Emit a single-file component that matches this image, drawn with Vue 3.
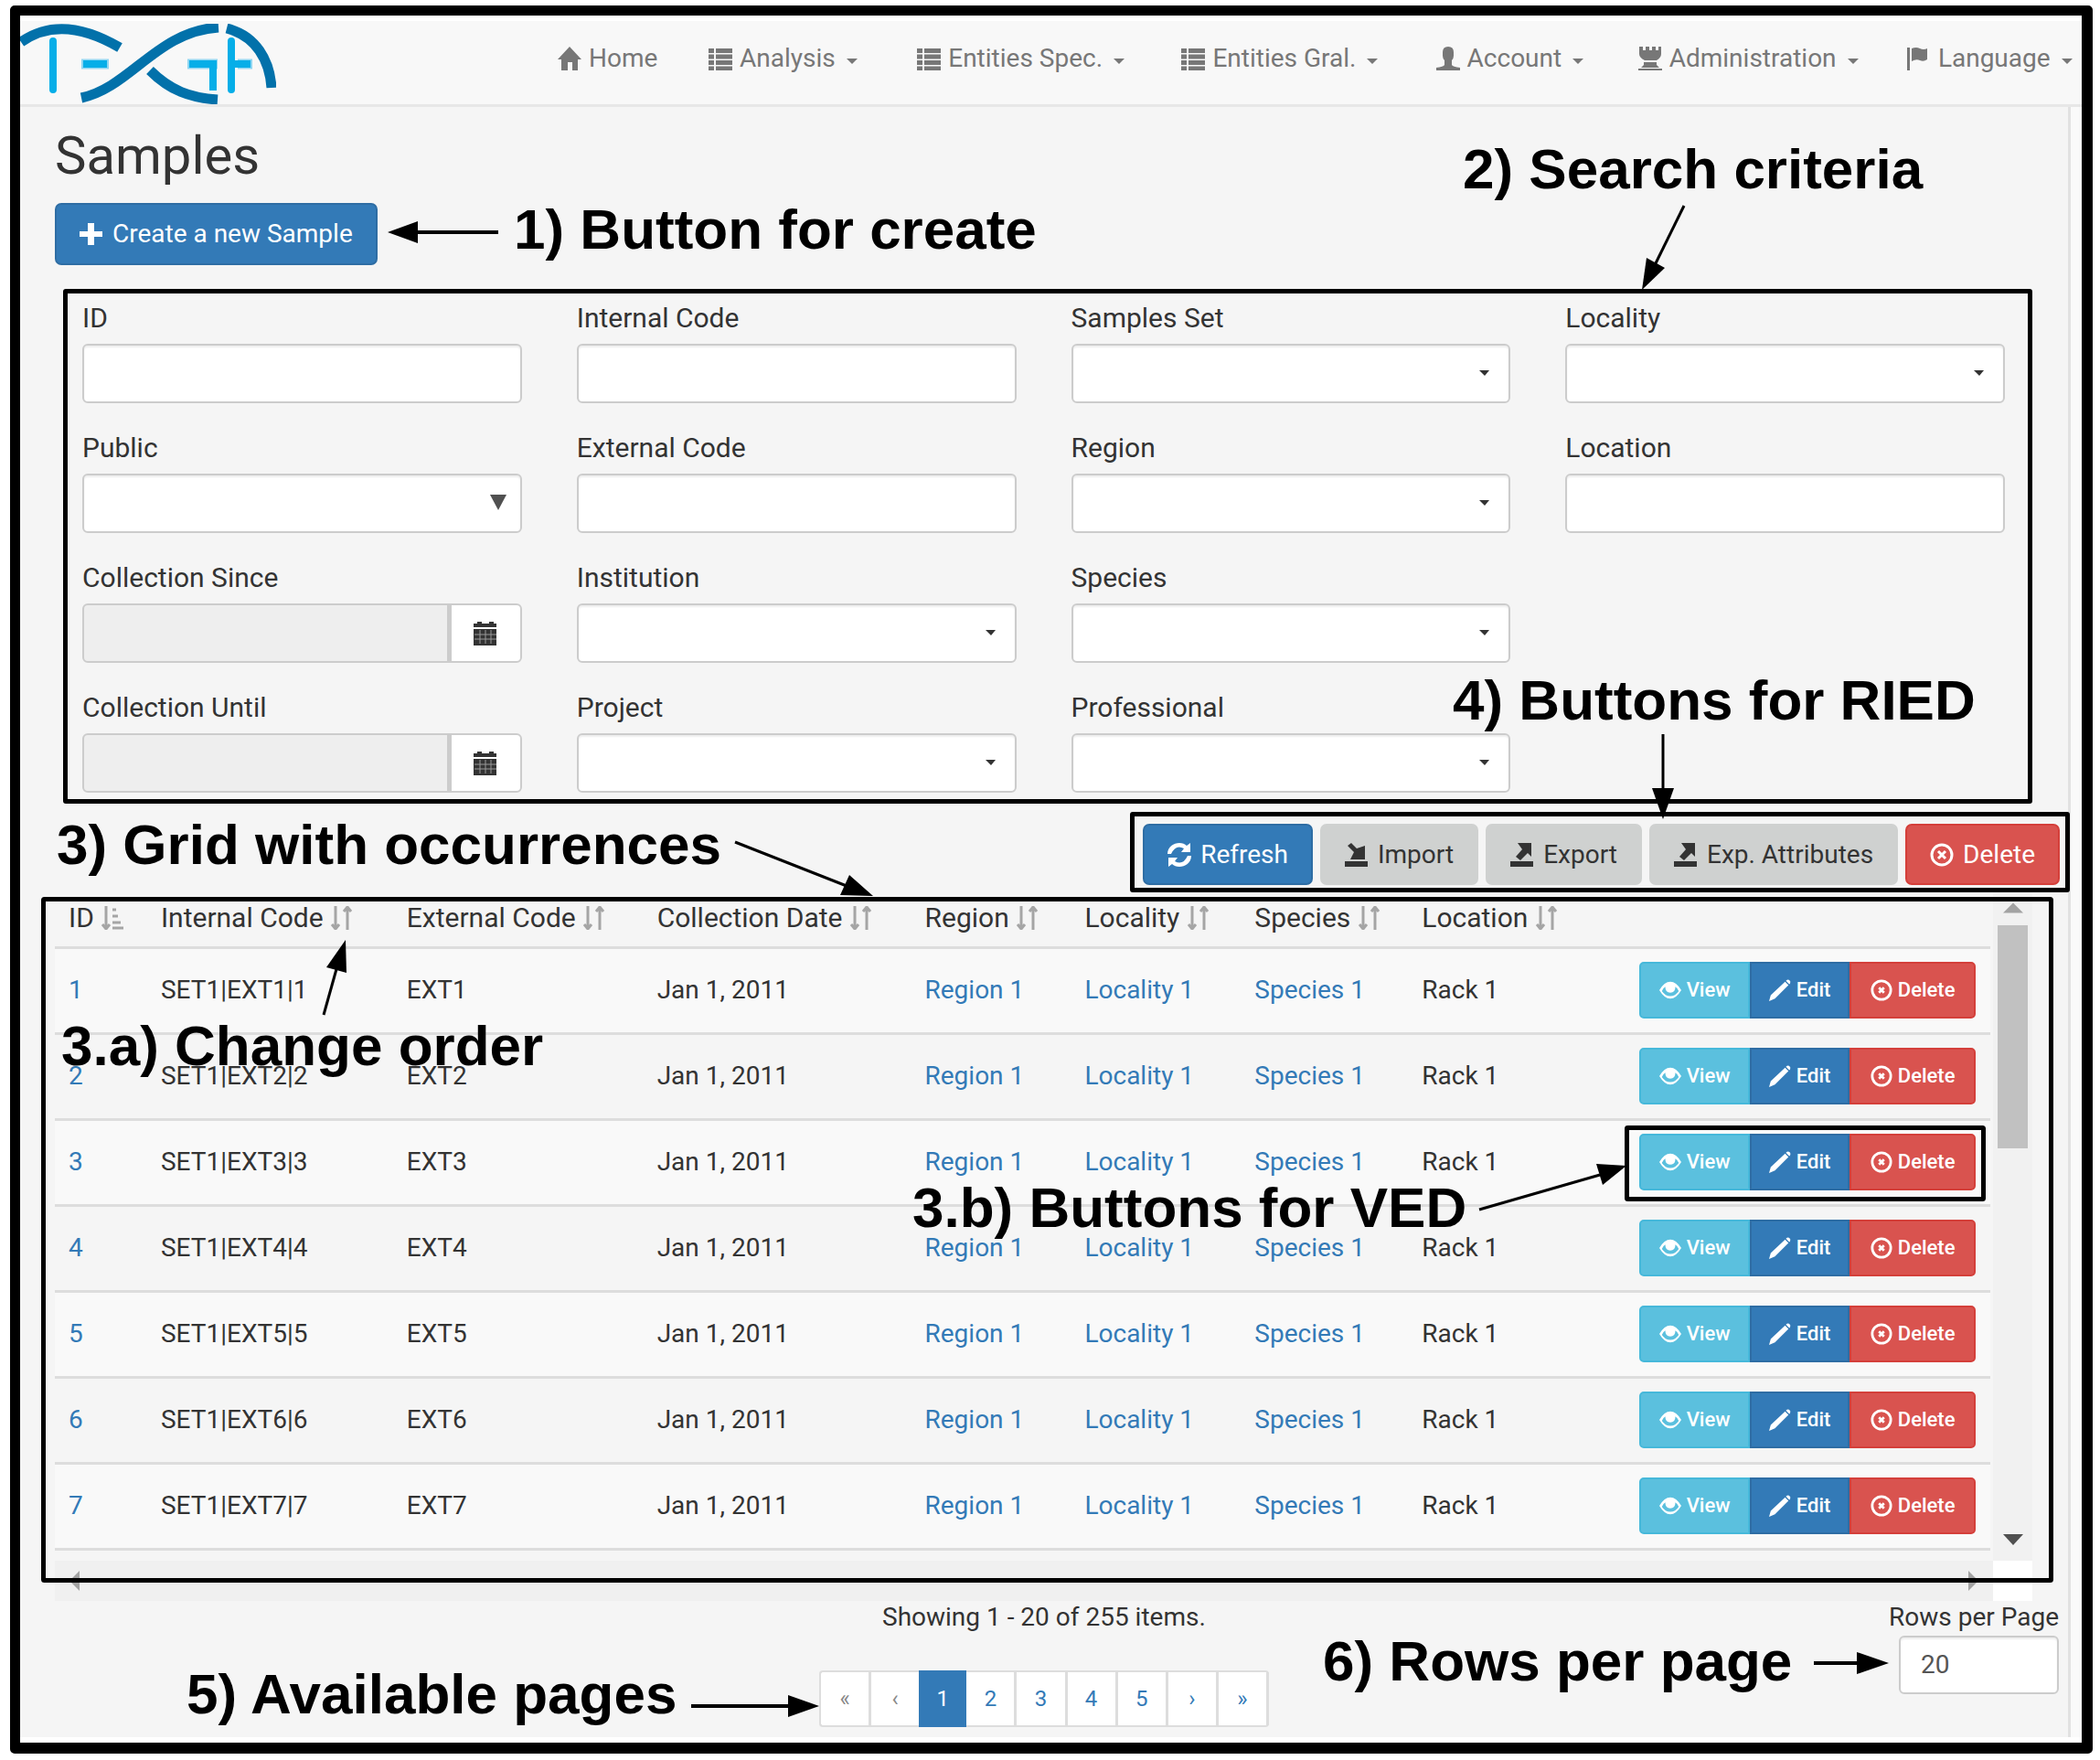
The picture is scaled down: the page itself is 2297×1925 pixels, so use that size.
<script setup>
import { ref } from 'vue'

const icons = {
  home: 'M13 0 26 14h-4v12h-6v-9h-5v9H4V14H0z',
  list: 'M0 2h6v5H0zM8 2h18v5H8zM0 8.500h6v5H0zM8 8.500h18v5H8zM0 15h6v5H0zM8 15h18v5H8zM0 21.500h6v4.500H0zM8 21.500h18v4.500H8z',
  pawn: 'M7 6q0-6 6-6t6 6v4q0 3-2 5v5q1 2 9 3v3H0v-3q8-1 9-3v-5q-2-2-2-5z',
  tower: 'M1 0h4v4h3V0h4v4h3V0h4v4h3V0h3v8q0 4-5 7H7Q1 12 1 8zM6 17h14v3H6zM6 20h14l3 3H3zM0 24h26v2H0z',
  flag: 'M0 1h3v25H0zM5 2q5-2 9 0t8 0v12q-4 3-8 1t-9 1z',
  plus: 'M9 1h7v9h9v6h-9v9H9v-9H0v-6h9z',
  refresh: 'M0 12C0 4 7 0 13 0q5 0 8 3l4-3v10H15l3-4Q9 1 4 12zM26 14c0 8-7 12-13 12q-5 0-8-3l-4 3V16h10l-3 4q9 5 14-6z',
  import: 'M0 20h25v6H0zM3 3l4-3 6 6 9-3v15H6l4-8z',
  export: 'M0 20h25v6H0zM8 0h15v15l-4-4-8 8-5-4 7-8z',
  eye: 'M0 13Q6 3 13 3t13 10Q20 23 13 23T0 13zM3 14q4 6 10 6t10-6q-1-3-4-5 0 7-6 7t-6-7q-3 2-4 5z',
  pencil: 'M0 26l2-7L19 3l4 4L7 23zM20 2q2-2 4-1t1 4l-1 1z',
  calendar: 'M0 2h4V0h5v2h8V0h5v2h3v4H0zM0 8h25v18H0z'
}

const nav = [
  { label: 'Home', icon: 'home', menu: false },
  { label: 'Analysis', icon: 'list', menu: true },
  { label: 'Entities Spec.', icon: 'list', menu: true },
  { label: 'Entities Gral.', icon: 'list', menu: true },
  { label: 'Account', icon: 'pawn', menu: true },
  { label: 'Administration', icon: 'tower', menu: true },
  { label: 'Language', icon: 'flag', menu: true }
]

const fields = [
  { id: 'id', label: 'ID', type: 'text' },
  { id: 'internal', label: 'Internal Code', type: 'text' },
  { id: 'set', label: 'Samples Set', type: 'select' },
  { id: 'locality', label: 'Locality', type: 'select' },
  { id: 'public', label: 'Public', type: 'native' },
  { id: 'external', label: 'External Code', type: 'text' },
  { id: 'region', label: 'Region', type: 'select' },
  { id: 'location', label: 'Location', type: 'text' },
  { id: 'since', label: 'Collection Since', type: 'date' },
  { id: 'institution', label: 'Institution', type: 'select' },
  { id: 'species', label: 'Species', type: 'select' },
  null,
  { id: 'until', label: 'Collection Until', type: 'date' },
  { id: 'project', label: 'Project', type: 'select' },
  { id: 'professional', label: 'Professional', type: 'select' }
]

const columns = [
  { label: 'ID', share: 101 },
  { label: 'Internal Code', share: 269 },
  { label: 'External Code', share: 274 },
  { label: 'Collection Date', share: 293 },
  { label: 'Region', share: 175 },
  { label: 'Locality', share: 186 },
  { label: 'Species', share: 183 },
  { label: 'Location', share: 238 },
  { label: '', share: 399 }
]
const totalShare = columns.reduce((sum, c) => sum + c.share, 0)

const rows = [1, 2, 3, 4, 5, 6, 7]
const pages = ['«', '‹', '1', '2', '3', '4', '5', '›', '»']
const perPage = ref('20')

const notes = [
  { text: '1) Button for create', x: 562, y: 272 },
  { text: '2) Search criteria', x: 1600, y: 206 },
  { text: '3) Grid with occurrences', x: 62, y: 945 },
  { text: '3.a) Change order', x: 67, y: 1165 },
  { text: '3.b) Buttons for VED', x: 998, y: 1342 },
  { text: '4) Buttons for RIED', x: 1589, y: 787 },
  { text: '5) Available pages', x: 204, y: 1874 },
  { text: '6) Rows per page', x: 1447, y: 1838 }
]
const arrows = [
  { line: 'M545 254H450', head: '424,254 457,242 457,266', thick: true },
  { line: 'M1842 225 1810 290', head: '1796,317 1801,282 1821,293' },
  { line: 'M804 921 926 969', head: '955,980 929,957 919,979' },
  { line: 'M354 1110 368 1060', head: '378,1028 357,1058 379,1064' },
  { line: 'M1618 1323 1750 1285', head: '1779,1275 1746,1273 1753,1296' },
  { line: 'M1819 803V865', head: '1819,896 1807,862 1831,862' },
  { line: 'M756 1866H865', head: '896,1866 862,1854 862,1878', thick: true },
  { line: 'M1984 1819H2035', head: '2066,1819 2031,1807 2031,1831', thick: true }
]
</script>

<template>
  <div class="page">
    <div class="frame">
      <header class="navbar">
        <a class="brand" href="#" aria-label="TEXGA">
          <svg viewBox="0 0 280 88" width="280" height="88" fill="none">
            <g stroke="#8fd6f2" stroke-width="11"><path d="M67 44H97M183 44H216M238 44H254" /></g>
            <g stroke="#06aee8" stroke-width="8">
              <path stroke-linecap="round" d="M36 19V72M231 19V72" />
              <path d="M69 44H95M185 44H211V73M231 44H252" />
            </g>
            <g stroke="#0271aa" stroke-width="11">
              <path d="M1 20C32 -2 68 2 109 26" />
              <path d="M67 81C120 70 150 8 217 4" />
              <path d="M142 51C164 73 186 81 216 83" />
              <path d="M226 5C258 13 273 40 275 70" />
            </g>
          </svg>
        </a>
        <nav class="menu">
          <a v-for="item in nav" :key="item.label" href="#">
            <svg class="icon" viewBox="0 0 26 26"><path :d="icons[item.icon]" /></svg>
            <span>{{ item.label }}</span>
            <svg v-if="item.menu" class="caret" viewBox="0 0 12 6"><path d="M0 0h12L6 6z" /></svg>
          </a>
        </nav>
      </header>

      <main>
        <h1>Samples</h1>
        <button class="btn primary create" type="button">
          <svg class="icon" viewBox="0 0 26 26"><path :d="icons.plus" /></svg>
          Create a new Sample
        </button>

        <form class="search" @submit.prevent>
          <template v-for="(f, i) in fields" :key="i">
            <div v-if="f" class="field">
              <label :for="f.id">{{ f.label }}</label>
              <input v-if="f.type === 'text'" :id="f.id" class="control" type="text" />
              <div v-else-if="f.type === 'date'" class="date">
                <input :id="f.id" class="control" type="text" readonly />
                <button type="button" aria-label="Open calendar">
                  <svg class="icon" viewBox="0 0 26 26">
                    <path :d="icons.calendar" />
                    <path d="M7 9v15M13 9v15M19 9v15M1 14h24M1 19h24" stroke="#999" stroke-width="1" />
                  </svg>
                </button>
              </div>
              <div v-else class="choice">
                <select :id="f.id" class="control"><option></option></select>
                <svg v-if="f.type === 'native'" class="drop" viewBox="0 0 18 17"><path d="M0 0h18L9 17z" /></svg>
                <svg v-else class="small-drop" viewBox="0 0 11 6"><path d="M0 0h11L6 6z" /></svg>
              </div>
            </div>
            <span v-else></span>
          </template>
        </form>

        <div class="toolbar">
          <button class="btn primary" type="button"><svg class="icon" viewBox="0 0 26 26"><path :d="icons.refresh" /></svg>Refresh</button>
          <button class="btn plain" type="button"><svg class="icon" viewBox="0 0 26 26"><path :d="icons.import" /></svg>Import</button>
          <button class="btn plain" type="button"><svg class="icon" viewBox="0 0 26 26"><path :d="icons.export" /></svg>Export</button>
          <button class="btn plain" type="button"><svg class="icon" viewBox="0 0 26 26"><path :d="icons.export" /></svg>Exp. Attributes</button>
          <button class="btn danger" type="button">
            <svg class="icon ring" viewBox="0 0 26 26"><circle cx="13" cy="13" r="11" /><path d="M9 9l8 8M17 9l-8 8" /></svg>Delete
          </button>
        </div>

        <section class="grid">
          <div class="viewport">
            <table>
              <colgroup>
                <col v-for="(c, i) in columns" :key="i" :style="{ width: (c.share / totalShare) * 100 + '%' }" />
              </colgroup>
              <thead>
                <tr>
                  <th v-for="(c, i) in columns" :key="i" scope="col">
                    {{ c.label }}
                    <svg v-if="c.label" class="sort" viewBox="0 0 26 26">
                      <path d="M6 0v24M2 20l4 5 4-5" />
                      <path v-if="i" d="M19 26V2M15 6l4-5 4 5" />
                      <path v-else d="M13 4h4M13 11h6M13 18h9M13 24h12" />
                    </svg>
                  </th>
                </tr>
              </thead>
              <tbody>
                <tr v-for="n in rows" :key="n">
                  <td><a href="#">{{ n }}</a></td>
                  <td>SET1|EXT{{ n }}|{{ n }}</td>
                  <td>EXT{{ n }}</td>
                  <td>Jan 1, 2011</td>
                  <td><a href="#">Region 1</a></td>
                  <td><a href="#">Locality 1</a></td>
                  <td><a href="#">Species 1</a></td>
                  <td>Rack 1</td>
                  <td>
                    <div class="group">
                      <button class="info" type="button"><svg class="icon" viewBox="0 0 26 26"><path fill-rule="evenodd" :d="icons.eye" /></svg>View</button>
                      <button class="primary" type="button"><svg class="icon" viewBox="0 0 26 26"><path :d="icons.pencil" /></svg>Edit</button>
                      <button class="danger" type="button"><svg class="icon ring" viewBox="0 0 26 26"><circle cx="13" cy="13" r="11" /><path d="M10 10l6 6M16 10l-6 6" /></svg>Delete</button>
                    </div>
                  </td>
                </tr>
              </tbody>
            </table>
          </div>
          <div class="vbar">
            <svg viewBox="0 0 22 11"><path d="M0 11h22L11 0z" fill="#a3a3a3" /></svg>
            <div class="thumb"></div>
            <svg viewBox="0 0 22 12"><path d="M0 0h22L11 12z" fill="#505050" /></svg>
          </div>
          <div class="hbar">
            <svg viewBox="0 0 11 22"><path d="M11 0v22L0 11z" /></svg>
            <svg viewBox="0 0 11 22"><path d="M0 0v22l11-11z" /></svg>
          </div>
          <div class="corner"></div>
        </section>

        <footer>
          <div class="paging">
            <p>Showing 1 - 20 of 255 items.</p>
            <nav class="pages" aria-label="Pages">
              <a v-for="(p, i) in pages" :key="i" href="#" :class="{ current: p === '1', off: i < 2 }">{{ p }}</a>
            </nav>
          </div>
          <div class="per-page">
            <label for="per-page">Rows per Page</label>
            <input id="per-page" v-model="perPage" class="control" type="text" />
          </div>
        </footer>
      </main>
    </div>

    <svg class="notes" viewBox="0 0 2297 1925">
      <rect x="47.500" y="983.500" width="2196" height="745" rx="1" />
      <rect x="1779.500" y="1233.500" width="390" height="78" rx="1" />
      <g v-for="a in arrows" :key="a.line">
        <path :d="a.line" :stroke-width="a.thick ? 4 : 3" />
        <polygon :points="a.head" />
      </g>
      <text v-for="n in notes" :key="n.text" :x="n.x" :y="n.y">{{ n.text }}</text>
    </svg>
  </div>
</template>

<style>
body { margin: 0; background: #fff; }
</style>

<style scoped>
* { box-sizing: border-box; }
.page {
  position: relative;
  padding: 6px 8px 6px 11px;
  font: 28px/36px Roboto, "Liberation Sans", sans-serif;
  color: #333;
}
button, input, select { font: inherit; color: inherit; }
a { color: #337ab7; text-decoration: none; }
.icon { width: 26px; height: 26px; fill: currentColor; flex: none; }
.frame {
  padding: 6px 0;
  border: 11px solid #000;
  border-right-width: 12px;
  border-bottom-width: 12px;
  border-radius: 5px;
  background: linear-gradient(#fff 0 100px, #fafafa 100px calc(100% - 6px), #fff calc(100% - 6px));
}

.navbar { display: flex; height: 94px; background: #f8f8f8; border-bottom: 3px solid #e7e7e7; }
.brand { width: 588px; flex: none; padding-top: 3px; }
.brand svg { display: block; }
.menu { flex: 1; display: grid; grid-template-columns: 165fr 228fr 289fr 278fr 221fr 294fr 191fr; }
.menu a { display: flex; align-items: center; height: 82px; color: #777; white-space: nowrap; }
.menu .icon { margin-right: 8px; }
.caret { width: 12px; height: 6px; margin-left: 12px; margin-top: 6px; fill: currentColor; }

main { display: flex; flex-direction: column; align-items: flex-start; margin-right: 12px; padding: 21px 0 0 38px; border-right: 3px solid #e2e2e2; background: #f5f5f5; }
h1 { margin: 0 0 20px; font-size: 58px; line-height: 64px; font-weight: 400; }
.btn { display: flex; align-items: center; gap: 10px; height: 67px; padding: 0 25px; border: 2px solid; border-radius: 7px; white-space: nowrap; }
.primary { background: #337ab7; border-color: #2e6da4; color: #fff; }
.plain { background: #cfd1d0; border-color: #cfd1d0; }
.danger { background: #d9534f; border-color: #d43f3a; color: #fff; }
.info { background: #5bc0de; border-color: #46b8da; color: #fff; }
.create { height: 68px; }
.ring { fill: none; stroke: currentColor; stroke-width: 3; }

.search { align-self: stretch; display: grid; grid-template-columns: repeat(4, 1fr); gap: 31px 60px; margin: 26px 39px 0 9px; padding: 9px 25px 7px 16px; border: 5px solid #000; border-radius: 3px; }
.field label { display: block; margin-bottom: 10px; font-size: 30px; }
.control { display: block; width: 100%; height: 65px; margin: 0; padding: 0 22px; border: 2px solid #ccc; border-radius: 6px; background: #fff; box-shadow: inset 0 2px 2px #eee; appearance: none; }
.date { display: flex; }
.date .control { flex: 1; min-width: 0; border-radius: 6px 0 0 6px; background: #eee; }
.date button { display: flex; align-items: center; justify-content: center; width: 80px; border: 2px solid #ccc; border-left-width: 3px; border-radius: 0 6px 6px 0; background: #fff; }
.choice { position: relative; }
.drop { position: absolute; right: 17px; top: 23px; width: 18px; height: 17px; fill: #505050; }
.small-drop { position: absolute; right: 23px; top: 29px; width: 11px; height: 6px; fill: #333; }

.toolbar { display: flex; gap: 8px; align-self: flex-end; margin: 9px -2px 0 0; padding: 8px 6px 3px 9px; border: 5px solid #000; border-radius: 3px; }

.grid { align-self: stretch; display: grid; grid-template-columns: 1fr 43px; margin-right: 39px; }
.viewport { padding: 0 3px 11px 0; }
table { width: 100%; table-layout: fixed; border-collapse: collapse; }
th { height: 60px; padding: 0 0 2px 15px; border-bottom: 3px solid #ddd; text-align: left; font-size: 30px; font-weight: 400; white-space: nowrap; }
td { height: 94px; padding: 0 0 0 15px; border-bottom: 3px solid #ddd; white-space: nowrap; }
tbody tr:nth-child(odd) { background: #f9f9f9; }
.sort { width: 26px; height: 26px; vertical-align: -3px; fill: none; stroke: #a5a5a5; stroke-width: 3; }
.group { display: flex; width: 368px; }
.group button { display: flex; align-items: center; justify-content: center; gap: 6px; height: 62px; padding: 0; border-width: 2px; border-style: solid; font-size: 22px; font-weight: 500; }
.group .icon { width: 24px; height: 24px; }
.group .info { width: 121px; border-radius: 5px 0 0 5px; }
.group .primary { width: 109px; }
.group .danger { width: 138px; border-radius: 0 5px 5px 0; }
.vbar { display: flex; flex-direction: column; align-items: center; padding: 11px 0 17px; background: #f1f1f1; }
.vbar svg { width: 22px; height: 12px; }
.thumb { width: 33px; height: 244px; margin: 13px 0 auto; background: #c1c1c1; }
.hbar { display: flex; align-items: center; justify-content: space-between; height: 44px; padding: 0 16px; background: #f0f0f0; }
.hbar svg { width: 11px; height: 22px; fill: #a3a3a3; }
.corner { background: #fff; }

footer { align-self: stretch; display: flex; justify-content: space-between; padding: 0 10px 11px 0; }
.paging { width: 492px; margin-left: 836px; }
.paging p { margin: 0 0 40px; padding-left: 69px; white-space: nowrap; }
.pages { display: flex; height: 62px; border: 2px solid #ddd; border-right: 0; border-radius: 4px; background: #fff; font-size: 24px; }
.pages a { flex: 1; display: flex; align-items: center; justify-content: center; border-right: 3px solid #ddd; }
.pages .off { color: #888; }
.pages .current { margin: -2px 0 -2px -3px; border: 0; background: #337ab7; color: #fff; }
.per-page { display: flex; flex-direction: column; align-items: flex-end; }
.per-page label { margin-bottom: 2px; }
.per-page .control { width: 175px; height: 64px; color: #555; }

.notes { position: absolute; left: 0; top: 0; width: 100%; height: auto; pointer-events: none; }
.notes rect, .notes path { fill: none; stroke: #000; }
.notes rect { stroke-width: 5; }
.notes text { font: bold 62px "Liberation Sans", Arial, sans-serif; fill: #000; }
</style>
